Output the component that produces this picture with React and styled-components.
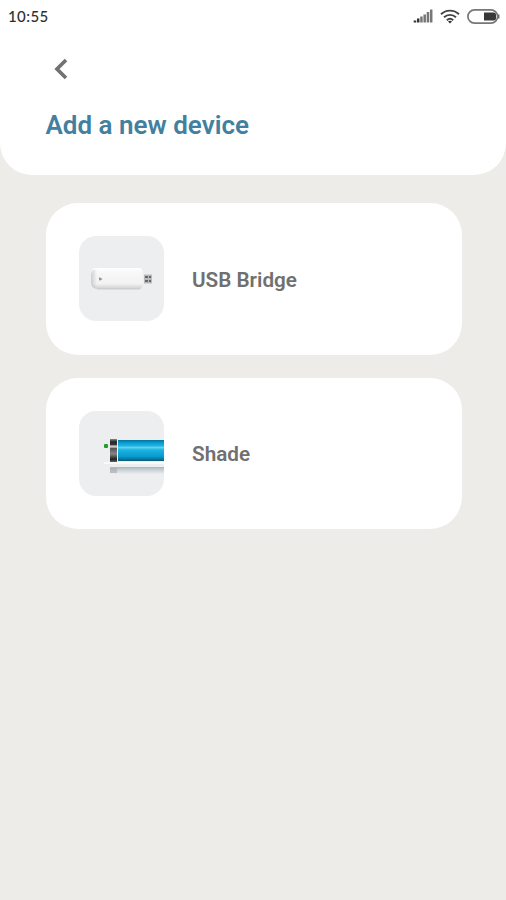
import React from 'react';
import styled, { createGlobalStyle } from 'styled-components';

const GlobalStyle = createGlobalStyle`
  * {
    box-sizing: border-box;
  }

  body {
    margin: 0;
    background-color: #edece8;
    font-family: Roboto, 'Liberation Sans', sans-serif;
  }
`;

const Screen = styled.div`
  min-height: 100vh;
  background-color: #edece8;
`;

const Header = styled.header`
  height: 175px;
  background-color: #ffffff;
  border-radius: 0 0 32px 32px;
`;

const StatusBar = styled.div`
  display: flex;
  justify-content: space-between;
  align-items: center;
  height: 32px;
  padding: 0 6px 0 8px;
`;

const Clock = styled.span`
  font-family: Lato, 'Liberation Sans', sans-serif;
  font-size: 15px;
  font-weight: 500;
  letter-spacing: 0.4px;
  color: #303030;
`;

const StatusIcons = styled.div`
  display: flex;
  align-items: center;
  gap: 7px;

  svg {
    display: block;
  }
`;

const BackButton = styled.button`
  display: flex;
  margin: 25px 0 0 53px;
  padding: 0;
  border: none;
  background: none;
  cursor: pointer;
`;

const Title = styled.h1`
  margin: 28px 0 0 45.5px;
  font-size: 26px;
  line-height: 32px;
  font-weight: 600;
  color: #4380a0;
`;

const DeviceList = styled.main`
  display: flex;
  flex-direction: column;
  gap: 23px;
  padding: 28px 44px 0 46px;
`;

const DeviceCard = styled.div`
  display: flex;
  align-items: center;
  gap: 28px;
  height: 151.5px;
  padding-left: 33px;
  border-radius: 32px;
  background-color: #ffffff;
`;

const Thumbnail = styled.div`
  width: 85px;
  height: 85px;
  border-radius: 17px;
  background-color: #eceef0;
  overflow: hidden;

  svg {
    display: block;
  }
`;

const DeviceName = styled.span`
  padding-top: 2px;
  font-size: 20.7px;
  font-weight: 600;
  color: #707070;
`;

const SignalIcon = () => (
  <svg width="20" height="14" viewBox="0 0 20 14">
    {[2, 4, 6, 8, 10.5, 13].map((height, index) => (
      <rect
        key={height}
        x={0.7 + index * 3.25}
        y={13.5 - height}
        width="2.5"
        height={height}
        fill={index < 2 ? '#333333' : '#777777'}
      />
    ))}
  </svg>
);

const WifiIcon = () => (
  <svg width="20" height="15" viewBox="0 0 20 15" fill="none" stroke="#444444" strokeWidth="1.9">
    <path d="M1 5.2C6 .4 14 .4 19 5.2" />
    <path d="M4 8.3c3.5-3.3 8.5-3.3 12 0" />
    <path d="M6.8 11.2c2-1.7 4.4-1.7 6.4 0" />
    <path d="M8 12.4Q10 11 12 12.4L10 14.6Z" fill="#333333" stroke="none" />
  </svg>
);

const BatteryIcon = () => (
  <svg width="33" height="15" viewBox="0 0 33 15">
    <rect x="0.9" y="0.9" width="29.7" height="13.2" rx="6.6" fill="#ffffff" stroke="#777777" strokeWidth="1.7" />
    <path d="M17 3.5h9.5q2.5 0 2.5 2.5v3q0 2.5-2.5 2.5H17z" fill="#383838" />
    <path d="M31.7 5.5v4" stroke="#686868" strokeWidth="1.5" />
  </svg>
);

const BackIcon = () => (
  <svg width="17" height="24" viewBox="0 0 17 24">
    <path d="M13 3L4 12l9 9" fill="none" stroke="#727272" strokeWidth="3.7" />
  </svg>
);

const UsbBridgeImage = () => (
  <svg width="85" height="85" viewBox="0 0 85 85">
    <defs>
      <linearGradient id="stick" x1="0" y1="0" x2="0" y2="1">
        <stop offset="0" stopColor="#ffffff" />
        <stop offset="0.25" stopColor="#f7f7f7" />
        <stop offset="0.75" stopColor="#f2f2f2" />
        <stop offset="1" stopColor="#cfcfcf" />
      </linearGradient>
      <linearGradient id="stickEnd">
        <stop offset="0" stopColor="#b9b9b9" />
        <stop offset="1" stopColor="#b9b9b9" stopOpacity="0" />
      </linearGradient>
    </defs>
    <path d="M17 32h44q3 1 3 5v10q0 4-3 6H19q-7 0-7-7v-8q0-6 5-6z" fill="url(#stick)" />
    <path d="M14 34q-2 2-2 5v8q1 6 6 6V33z" fill="url(#stickEnd)" opacity="0.65" />
    <path d="M18 53h43" stroke="#c6c7c8" strokeWidth="0.8" />
    <path d="M20 41l3.5 2-3.5 1.8z" fill="#9b9c9e" />
    <circle cx="21.5" cy="43.3" r="1" fill="#8a9292" />
    <rect x="65" y="38.5" width="8" height="9" fill="#b9b9b9" />
    <path d="M66 40h3v2h-3zM70 40h2v2h-2zM66 44h3v2h-3zM70 44h2v2h-2z" fill="#66686a" />
  </svg>
);

const ShadeImage = () => (
  <svg width="85" height="85" viewBox="0 0 85 85">
    <defs>
      <linearGradient id="tube" x1="0" y1="0" x2="0" y2="1">
        <stop offset="0" stopColor="#087199" />
        <stop offset="0.12" stopColor="#0799ce" />
        <stop offset="0.27" stopColor="#20b2df" />
        <stop offset="0.36" stopColor="#62d3ee" />
        <stop offset="0.47" stopColor="#1bb4e2" />
        <stop offset="0.78" stopColor="#079bd0" />
        <stop offset="1" stopColor="#075b78" />
      </linearGradient>
      <linearGradient id="cap" x1="0" y1="0" x2="0" y2="1">
        <stop offset="0" stopColor="#8a8a8a" />
        <stop offset="0.12" stopColor="#292929" />
        <stop offset="0.27" stopColor="#383838" />
        <stop offset="0.29" stopColor="#d0d0d0" />
        <stop offset="0.36" stopColor="#bbbbbb" />
        <stop offset="0.4" stopColor="#555555" />
        <stop offset="0.65" stopColor="#858585" />
        <stop offset="0.88" stopColor="#202020" />
        <stop offset="1" stopColor="#626262" />
      </linearGradient>
      <linearGradient id="reflection" x1="0" y1="0" x2="0" y2="1">
        <stop offset="0" stopColor="#a9b6c0" />
        <stop offset="0.35" stopColor="#c4ccd1" />
        <stop offset="1" stopColor="#eceef0" />
      </linearGradient>
    </defs>
    <rect x="25" y="33" width="4" height="4" rx="1" fill="#239d24" />
    <path d="M25 52h60" stroke="#fafafa" strokeWidth="2" />
    <rect x="31" y="28" width="7" height="23" fill="url(#cap)" />
    <rect x="38" y="29" width="1" height="21" fill="#f1f5f6" />
    <rect x="39" y="29" width="46" height="21" fill="url(#tube)" />
    <rect x="31" y="56" width="54" height="7" fill="url(#reflection)" />
    <rect x="31" y="57" width="7" height="5" fill="#a8a8a8" opacity="0.6" />
  </svg>
);

const devices = [
  { name: 'USB Bridge', Image: UsbBridgeImage },
  { name: 'Shade', Image: ShadeImage },
];

const App = () => {
  return (
    <Screen>
      <GlobalStyle />
      <Header>
        <StatusBar>
          <Clock>10:55</Clock>
          <StatusIcons>
            <SignalIcon />
            <WifiIcon />
            <BatteryIcon />
          </StatusIcons>
        </StatusBar>
        <BackButton aria-label="Back">
          <BackIcon />
        </BackButton>
        <Title>Add a new device</Title>
      </Header>
      <DeviceList>
        {devices.map(({ name, Image }) => (
          <DeviceCard key={name}>
            <Thumbnail>
              <Image />
            </Thumbnail>
            <DeviceName>{name}</DeviceName>
          </DeviceCard>
        ))}
      </DeviceList>
    </Screen>
  );
};

export default App;
